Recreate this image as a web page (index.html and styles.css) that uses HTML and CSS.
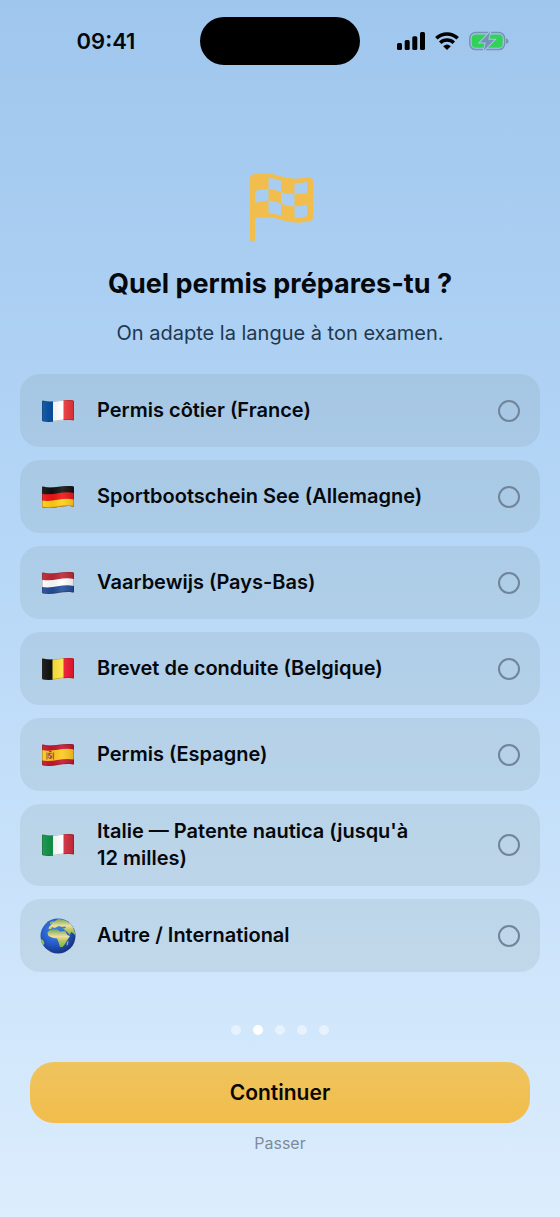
FILE: index.html
```html
<!DOCTYPE html>
<html lang="fr">
<head>
<meta charset="utf-8">
<meta name="viewport" content="width=device-width, initial-scale=1">
<title>Quel permis prépares-tu ?</title>
<link rel="stylesheet" href="styles.css">
</head>
<body>
<svg width="0" height="0" class="defs" aria-hidden="true">
  <defs>
    <clipPath id="wave"><path d="M0 2Q0 .7 1 1C11 4 19-.8 31 .8Q32 1 32 2V20Q32 21.100 31 20.900C20 18.800 12 24 1 22Q0 21.800 0 20.800Z"/></clipPath>
    <linearGradient id="shade" x2="1" y2="0">
      <stop offset="0" stop-color="#fff" stop-opacity=".08"/>
      <stop offset=".3" stop-color="#000" stop-opacity=".06"/>
      <stop offset=".62" stop-color="#fff" stop-opacity=".1"/>
      <stop offset="1" stop-color="#000" stop-opacity=".12"/>
    </linearGradient>
    <g id="fold">
      <path d="M0 0H32V23H0Z" fill="url(#shade)"/>
      <path d="M.4 2Q.4 1 1 1.200C11 4 19-.6 31 1Q31.600 1.100 31.600 2V20Q31.600 20.800 31 20.600C20 18.500 12 23.700 1 21.700Q.4 21.500 .4 20.800Z" fill="none" stroke="#222" stroke-opacity=".35" stroke-width=".8"/>
    </g>
  </defs>
</svg>
<div class="screen">
  <header class="status">
    <span class="time">09:41</span>
    <span class="island"></span>
    <span class="indicators">
      <svg width="28" height="18" viewBox="0 0 28 18" aria-label="Réseau"><rect x="0" y="11" width="5" height="7" rx="1.5"/><rect x="7.7" y="8" width="5" height="10" rx="1.5"/><rect x="15.3" y="4.300" width="5" height="13.700" rx="1.5"/><rect x="23" y="0" width="5" height="18" rx="1.5"/></svg>
      <svg width="24" height="18" viewBox="0 0 24 18" aria-label="Wi-Fi"><g fill="none" stroke="#000" stroke-width="3.500"><path d="M1.300 6.300A15.500 15.500 0 0 1 22.700 6.300"/><path d="M5.200 10.700A9.700 9.700 0 0 1 18.800 10.700"/></g><path d="M12 18L8.200 14.200Q12 11 15.800 14.200Z"/></svg>
      <svg width="40" height="20" viewBox="0 0 40 20" aria-label="Batterie en charge"><rect x=".8" y="1.600" width="34.800" height="17" rx="5.800" fill="none" stroke="#7892b3" stroke-width="1.500"/><rect x="2.700" y="3.500" width="31" height="13.200" rx="4" fill="#32d158"/><path d="M37 7.300Q39.500 8.300 39.500 10.200T37 13.100Z" fill="#7892b3"/><path d="M21.300 .8L11 11.500H16.800L14.800 19.500L25.400 8.700H19.300Z" fill="#7892b3" stroke="#a0c7ed" stroke-width="2" paint-order="stroke"/></svg>
    </span>
  </header>
  <main>
    <svg class="hero" width="68" height="70" viewBox="-4 0 68 70" aria-hidden="true">
      <path d="M0 5Q0 2.500 2.500 1.700C12-1 22 0 30 3Q43 7.500 57 4.300Q63 3.500 63 8V44Q63 47 60 48Q46 52 32 47Q18 42 5 45V65Q5 69 2.500 69T0 65Z" fill="#f1be4e"/>
      <g fill="#a8cdf0"><path d="M18.500 5Q25 5 31 7.800V19Q25 16 18.500 16Z"/><path d="M44.500 10Q51 10.300 57 8.800V19.500Q51 21.500 44.500 21.300Z"/><path d="M5 18Q12 15.500 18.500 16V27.500Q12 27.800 5 29.800Z"/><path d="M31 19Q37 21.500 44.500 21.300V33.500Q37 33.300 31 30.500Z"/><path d="M18.500 27.500Q25 28 31 30.500V43Q25 40 18.500 39.500Z"/><path d="M44.500 33.500Q51 33.500 57 31.500V43Q51 45.500 44.500 45Z"/></g>
    </svg>
    <h1>Quel permis prépares-tu ?</h1>
    <p class="lead">On adapte la langue à ton examen.</p>
    <form id="permit" class="options">
      <label class="option"><svg class="flag" viewBox="0 0 32 23" aria-hidden="true"><g clip-path="url(#wave)"><path fill="#fff" d="M0 0H32V23H0Z"/><path fill="#064fa2" d="M0 0H11V23H0Z"/><path fill="#ee3339" d="M21.500 0H32V23H21.500Z"/></g><use href="#fold" clip-path="url(#wave)"/></svg><span class="name">Permis côtier (France)</span><input type="radio" name="permit"></label>
      <label class="option"><svg class="flag" viewBox="0 0 32 23" aria-hidden="true"><g clip-path="url(#wave)"><path fill="#111" d="M0 0H32V23H0Z"/><path fill="#ee1515" d="M0 8.200C12 10.500 20 5 32 7.500V23H0Z"/><path fill="#ffcf16" d="M0 15C12 17 20 11.500 32 14V23H0Z"/></g><use href="#fold" clip-path="url(#wave)"/></svg><span class="name">Sportbootschein See (Allemagne)</span><input type="radio" name="permit"></label>
      <label class="option"><svg class="flag" viewBox="0 0 32 23" aria-hidden="true"><g clip-path="url(#wave)"><path fill="#bd2635" d="M0 0H32V23H0Z"/><path fill="#fff" d="M0 8.200C12 10.500 20 5 32 7.500V23H0Z"/><path fill="#234d99" d="M0 15.500C12 17.500 20 12 32 14.500V23H0Z"/></g><use href="#fold" clip-path="url(#wave)"/></svg><span class="name">Vaarbewijs (Pays-Bas)</span><input type="radio" name="permit"></label>
      <label class="option"><svg class="flag" viewBox="0 0 32 23" aria-hidden="true"><g clip-path="url(#wave)"><path fill="#ffe33d" d="M0 0H32V23H0Z"/><path fill="#111" d="M0 0H10.500V23H0Z"/><path fill="#f1142d" d="M21.500 0H32V23H21.500Z"/></g><use href="#fold" clip-path="url(#wave)"/></svg><span class="name">Brevet de conduite (Belgique)</span><input type="radio" name="permit"></label>
      <label class="option"><svg class="flag" viewBox="0 0 32 23" aria-hidden="true"><g clip-path="url(#wave)"><path fill="#c5162d" d="M0 0H32V23H0Z"/><path fill="#ffc820" d="M0 6.600C12 8.800 20 3.500 32 6V16C20 13.700 12 19 0 17Z"/><path d="M5 9V16M11.500 9V16" stroke="#9a684c" stroke-width="1.200"/><path fill="#b64a36" d="M6.200 9.500H10.300V14Q8.300 17 6.200 14Z"/><path fill="#8d4728" d="M6.500 8.700Q8.300 5.800 10 8.700Z"/><path fill="#e5b7a3" d="M8.400 10H10V12H8.400ZM6.600 12.200H8.200V14H6.600Z"/></g><use href="#fold" clip-path="url(#wave)"/></svg><span class="name">Permis (Espagne)</span><input type="radio" name="permit"></label>
      <label class="option"><svg class="flag" viewBox="0 0 32 23" aria-hidden="true"><g clip-path="url(#wave)"><path fill="#fff" d="M0 0H32V23H0Z"/><path fill="#109347" d="M0 0H11V23H0Z"/><path fill="#d2293b" d="M21.500 0H32V23H21.500Z"/></g><use href="#fold" clip-path="url(#wave)"/></svg><span class="name">Italie — Patente nautica (jusqu'à 12&nbsp;milles)</span><input type="radio" name="permit"></label>
      <label class="option"><svg class="globe" viewBox="0 0 36 36" aria-hidden="true">
        <defs><radialGradient id="sea" cx=".4" cy=".35" r=".65"><stop offset="0" stop-color="#4288e7"/><stop offset=".6" stop-color="#2459c8"/><stop offset="1" stop-color="#173582"/></radialGradient><linearGradient id="land" x2="0" y2="1"><stop offset="0" stop-color="#7ba957"/><stop offset=".4" stop-color="#edde9e"/><stop offset=".65" stop-color="#b8c75c"/><stop offset="1" stop-color="#7cb659"/></linearGradient><clipPath id="disc"><circle cx="18" cy="18" r="17.500"/></clipPath></defs>
        <circle cx="18" cy="18" r="17.500" fill="url(#sea)"/>
        <g clip-path="url(#disc)" fill="url(#land)"><path d="M9 9L11 7L12 5L15 3L18 1Q28 1 33 9L36 18L33 15L31 14L30 17L26 13L22 11L17 9.500L14 10L12 9L11 11L8.500 11Z"/><path d="M7.500 15Q9 11.500 12 11.500L17 11.500L20 13.500L25 13L27.500 17L30 18L27 22.500L25 26L22.500 29L20 29L18.500 24L17 20.500L13 20L8.500 18Z"/><path d="M27 24L28.500 22.500L28 27L26.500 27.500ZM0 21L3 22L4.500 25L3 28H0ZM10 4L14 2.500L13 4.500L10 6.500Z"/></g>
        <path d="M16 9.500L19 8L22 9L25 8.500L26 10L23 10.500L25 12L21 12L18 11Z" fill="#3b7eca"/>
      </svg><span class="name">Autre / International</span><input type="radio" name="permit"></label>
    </form>
  </main>
  <footer>
    <div class="dots" aria-label="Étape 2 sur 5"><i></i><i class="current"></i><i></i><i></i><i></i></div>
    <button class="continue" type="submit" form="permit">Continuer</button>
    <button class="skip" type="button">Passer</button>
  </footer>
</div>
</body>
</html>
```
FILE: styles.css
```css
* { box-sizing: border-box; }

body {
  margin: 0;
  font-family: Inter, "Noto Sans", sans-serif;
  color: #05080c;
}

.defs { position: absolute; }

.screen {
  min-height: 100vh;
  display: flex;
  flex-direction: column;
  background: linear-gradient(#9fc6ed, #b6d7f7 45%, #dcedfd);
}

.status {
  display: grid;
  grid-template-columns: 1fr 160px 1fr;
  align-items: center;
  padding-top: 17px;
}

.time {
  justify-self: center;
  padding-left: 12px;
  font-size: 22px;
  font-weight: 600;
}

.island {
  height: 48px;
  border-radius: 24px;
  background: #000;
}

.indicators {
  display: flex;
  align-items: center;
  justify-content: center;
  gap: 10px;
  padding-right: 14px;
}

main {
  flex: 1;
  display: flex;
  flex-direction: column;
  align-items: center;
  padding: 108px 20px 0;
}

h1 {
  margin: 23px 0 0;
  font-size: 27px;
  line-height: 36px;
  font-weight: 700;
  text-align: center;
}

.lead {
  margin: 17px 0 0;
  font-size: 20px;
  line-height: 28px;
  color: #20384f;
  text-align: center;
}

.options {
  align-self: stretch;
  display: grid;
  gap: 13px;
  margin-top: 27px;
}

.option {
  display: flex;
  align-items: center;
  min-height: 73px;
  padding: 14px 20px;
  border-radius: 20px;
  background: rgba(112, 128, 126, 0.13);
  font-size: 20px;
  line-height: 27px;
  font-weight: 600;
}

.flag, .globe {
  flex: none;
  width: 36px;
  height: 36px;
}

.flag { padding: 0 2px; }

.name {
  flex: 1;
  padding: 0 21px;
}

input {
  appearance: none;
  flex: none;
  width: 22px;
  height: 22px;
  margin: 0;
  border: 2px solid #71859a;
  border-radius: 50%;
}

input:checked { background: #f1be4e; }

footer {
  display: flex;
  flex-direction: column;
  align-items: center;
  padding: 53px 30px 62px;
}

.dots {
  display: flex;
  gap: 12px;
}

.dots i {
  width: 10px;
  height: 10px;
  border-radius: 50%;
  background: rgba(255, 255, 255, 0.45);
}

.dots .current { background: #fff; }

button {
  border: 0;
  font-family: inherit;
  cursor: pointer;
}

.continue {
  width: 100%;
  height: 61px;
  margin-top: 27px;
  border-radius: 24px;
  background: linear-gradient(#eec45e, #f2bd4b);
  font-size: 21px;
  font-weight: 600;
  color: #0a0702;
}

.skip {
  margin-top: 8px;
  padding: 0;
  background: none;
  font-size: 16px;
  line-height: 24px;
  color: #7e8b9a;
}
```
